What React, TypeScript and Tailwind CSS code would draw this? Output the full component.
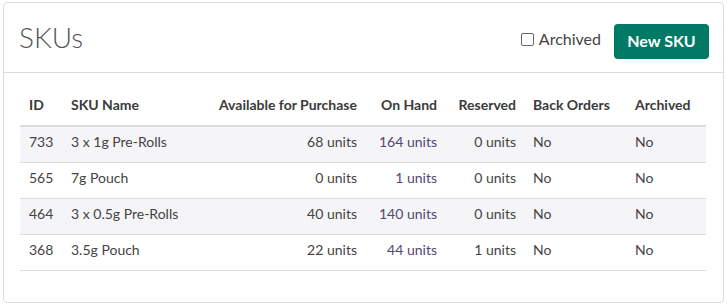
import React from "react";

const rows = [
  { id: 733, name: "3 x 1g Pre-Rolls", avail: "68 units", onHand: "164 units", reserved: "0 units", back: "No", archived: "No" },
  { id: 565, name: "7g Pouch", avail: "0 units", onHand: "1 units", reserved: "0 units", back: "No", archived: "No" },
  { id: 464, name: "3 x 0.5g Pre-Rolls", avail: "40 units", onHand: "140 units", reserved: "0 units", back: "No", archived: "No" },
  { id: 368, name: "3.5g Pouch", avail: "22 units", onHand: "44 units", reserved: "1 units", back: "No", archived: "No" },
];

export default function App() {
  return (
    <div className="w-[727px] h-[305px] bg-white pt-[2px] pl-[3px]" style={{ fontFamily: "Lato, 'Open Sans', sans-serif" }}>
      <div className="w-[721px] h-[301px] border border-[#dcdcde] rounded-[4px] flex flex-col text-[#444]">
        <div className="h-[70px] flex items-center justify-between pl-[15px] pr-[14px] border-b border-[#dcdcde]">
          <h1 className="text-[28px] font-light text-[#555] leading-none -mt-[1px]">SKUs</h1>
          <div className="flex items-center mt-[8px]">
            <label className="flex items-center text-[16px] text-[#444] mr-[13px] -mt-[5px]">
              <span className="w-[13px] h-[13px] border border-[#666] rounded-[2px] bg-white mr-[5px]" />
              Archived
            </label>
            <button className="h-[35px] w-[95px] rounded-[4px] bg-[#007a64] text-white font-bold text-[16px] pb-[2px]">New SKU</button>
          </div>
        </div>
        <div className="px-[16px] pt-[14px]">
          <table className="table-fixed w-[686px] text-[14px] border-collapse">
            <colgroup>
              <col className="w-[42px]" />
              <col className="w-[143px]" />
              <col className="w-[161px]" />
              <col className="w-[80px]" />
              <col className="w-[79px]" />
              <col className="w-[101px]" />
              <col className="w-[80px]" />
            </colgroup>
            <thead>
              <tr className="h-[39px] border-b-2 border-[#dcdcde] text-[#3a3a3a] font-bold">
                <th className="px-[9px] pb-[3px] text-left">ID</th>
                <th className="px-[9px] pb-[3px] text-left">SKU Name</th>
                <th className="px-[9px] pb-[3px] text-right">Available for Purchase</th>
                <th className="px-[9px] pb-[3px] text-right">On Hand</th>
                <th className="px-[9px] pb-[3px] text-right">Reserved</th>
                <th className="pl-[8px] pr-[9px] pb-[3px] text-left">Back Orders</th>
                <th className="px-[9px] pb-[3px] text-left">Archived</th>
              </tr>
            </thead>
            <tbody>
              {rows.map((r, i) => (
                <tr key={r.id} className={`h-[36px] border-b border-[#dcdcde] ${i % 2 === 0 ? "bg-[#f5f5f7]" : "bg-white"}`}>
                  <td className="px-[9px] pb-[6px] text-left">{r.id}</td>
                  <td className="px-[9px] pb-[6px] text-left">{r.name}</td>
                  <td className="px-[9px] pb-[6px] text-right">{r.avail}</td>
                  <td className="px-[9px] pb-[6px] text-right text-[#524773]">{r.onHand}</td>
                  <td className="px-[9px] pb-[6px] text-right">{r.reserved}</td>
                  <td className="pl-[8px] pr-[9px] pb-[6px] text-left">{r.back}</td>
                  <td className="px-[9px] pb-[6px] text-left">{r.archived}</td>
                </tr>
              ))}
            </tbody>
          </table>
        </div>
      </div>
    </div>
  );
}
